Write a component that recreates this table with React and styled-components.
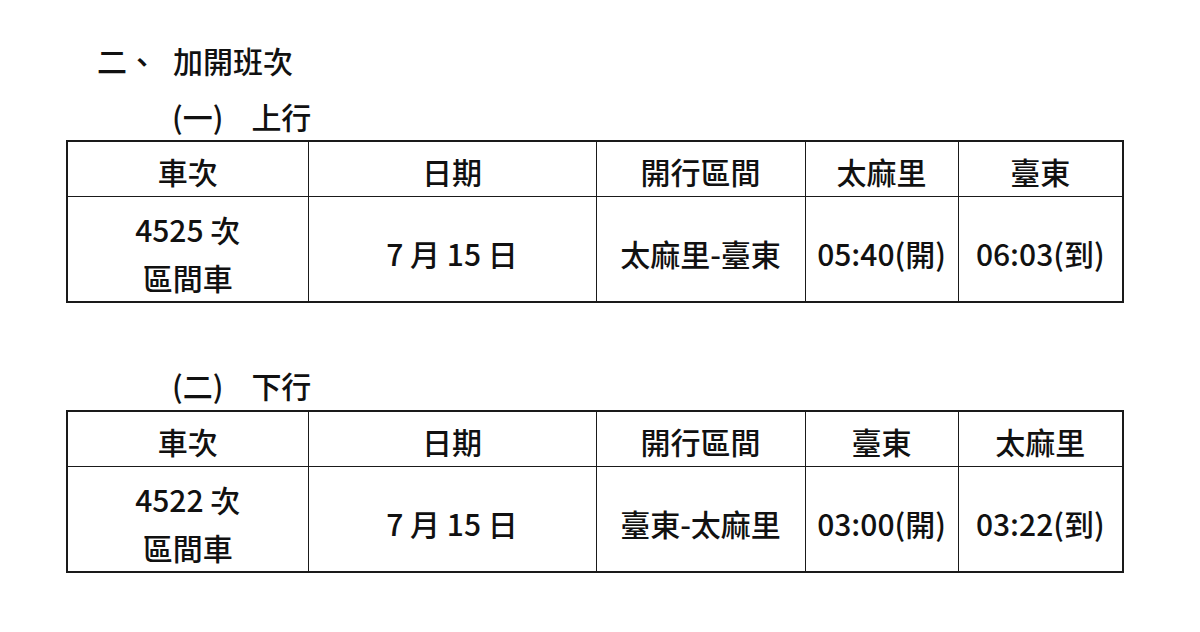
import React from 'react'
import styled, { createGlobalStyle } from 'styled-components'

const Global = createGlobalStyle`
  body {
    margin: 0;
    background: #fff;
    font-family: "Noto Sans CJK TC", "Noto Sans", sans-serif;
    color: #111;
  }
`;

const Page = styled.div`
  padding: 40px 78px 0 66px;
`;

const Title = styled.h2`
  margin: 0 0 0 31px;
  font-size: 30px;
  font-weight: 500;
  line-height: 40px;
  display: flex;
  gap: 16px;
`;

const SubTitle = styled.h3`
  margin: ${props => props.top}px 0 ${props => props.bottom}px 106px;
  font-size: 30px;
  font-weight: 500;
  line-height: 40px;
  display: flex;
  gap: 28px;
`;

const Table = styled.table`
  width: 1056px;
  border-collapse: collapse;
  table-layout: fixed;
  border: 2px solid #1a1a1a;
`;

const Th = styled.th`
  height: 51px;
  padding: 3px 0 0;
  border: 1.5px solid #1a1a1a;
  font-size: 30px;
  font-weight: 500;
  line-height: 40px;
  text-align: center;
  vertical-align: middle;
`;

const Td = styled.td`
  height: 96px;
  padding: 8px 0 0;
  border: 1.5px solid #1a1a1a;
  font-size: 30px;
  font-weight: 500;
  line-height: 48px;
  text-align: center;
  vertical-align: middle;
  white-space: nowrap;
`;

const widths = [241, 288, 209, 153, 165];

const Schedule = ({ heads, train, route, dep, arr }) => (
  <Table>
    <colgroup>
      {widths.map((w, i) => <col key={i} style={{ width: w }} />)}
    </colgroup>
    <thead>
      <tr>
        {heads.map(h => <Th key={h}>{h}</Th>)}
      </tr>
    </thead>
    <tbody>
      <tr>
        <Td>{train} 次<br />區間車</Td>
        <Td>7 月 15 日</Td>
        <Td>{route}</Td>
        <Td>{dep}(開)</Td>
        <Td>{arr}(到)</Td>
      </tr>
    </tbody>
  </Table>
);

const App = () => (
  <>
    <Global />
    <Page>
      <Title><span>二、</span><span>加開班次</span></Title>
      <SubTitle top={16} bottom={4}><span>(一)</span><span>上行</span></SubTitle>
      <Schedule
        heads={['車次', '日期', '開行區間', '太麻里', '臺東']}
        train="4525"
        route="太麻里-臺東"
        dep="05:40"
        arr="06:03"
      />
      <SubTitle top={62} bottom={5}><span>(二)</span><span>下行</span></SubTitle>
      <Schedule
        heads={['車次', '日期', '開行區間', '臺東', '太麻里']}
        train="4522"
        route="臺東-太麻里"
        dep="03:00"
        arr="03:22"
      />
    </Page>
  </>
);

export default App
